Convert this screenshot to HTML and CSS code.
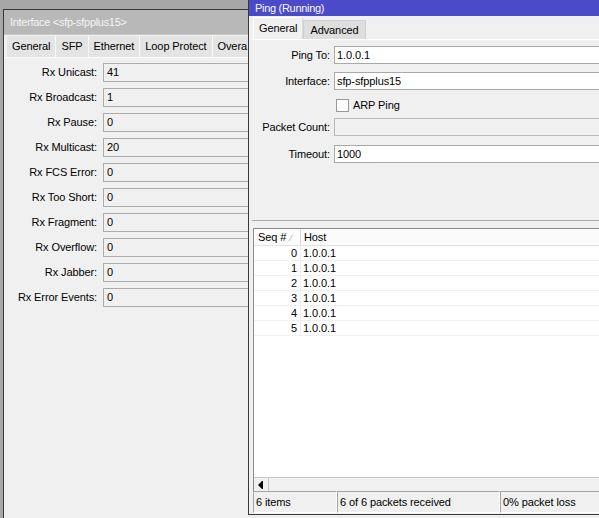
FILE: index.html
```html
<!DOCTYPE html>
<html lang="en">
<head>
<meta charset="UTF-8">
<title>Interface / Ping</title>
<link rel="stylesheet" href="styles.css">
</head>
<body>

<div class="screen">

  <!-- Interface window (behind) -->
  <div class="iface">
    <div class="titlebar">Interface &lt;sfp-sfpplus15&gt;</div>
    <div class="iface-tabs">
      <span class="itab">General</span>
      <span class="itab">SFP</span>
      <span class="itab">Ethernet</span>
      <span class="itab">Loop Protect</span>
      <span class="itab last">Overa</span>
    </div>
    <div class="iface-panel">
      <div class="stat-grid">
        <span class="lbl">Rx Unicast:</span><span class="ro">41</span>
        <span class="lbl">Rx Broadcast:</span><span class="ro">1</span>
        <span class="lbl">Rx Pause:</span><span class="ro">0</span>
        <span class="lbl">Rx Multicast:</span><span class="ro">20</span>
        <span class="lbl">Rx FCS Error:</span><span class="ro">0</span>
        <span class="lbl">Rx Too Short:</span><span class="ro">0</span>
        <span class="lbl">Rx Fragment:</span><span class="ro">0</span>
        <span class="lbl">Rx Overflow:</span><span class="ro">0</span>
        <span class="lbl">Rx Jabber:</span><span class="ro">0</span>
        <span class="lbl">Rx Error Events:</span><span class="ro">0</span>
      </div>
    </div>
  </div>

  <!-- Ping window (active) -->
  <div class="ping-wrap">
    <div class="ping">
      <div class="titlebar active">Ping (Running)</div>
      <div class="ping-tabs">
        <span class="ptab selected">General</span>
        <span class="ptab">Advanced</span>
      </div>
      <div class="ping-panel">
        <div class="frow r1"><span class="flbl">Ping To:</span><span class="inp">1.0.0.1</span></div>
        <div class="frow r2"><span class="flbl">Interface:</span><span class="inp">sfp-sfpplus15</span></div>
        <div class="frow r3"><span class="flbl"></span><span class="chk"></span><span class="chk-text">ARP Ping</span></div>
        <div class="frow r4"><span class="flbl">Packet Count:</span><span class="inp disabled"></span></div>
        <div class="frow r5"><span class="flbl">Timeout:</span><span class="inp">1000</span></div>
      </div>

      <div class="list">
        <div class="thead">
          <span class="th seq">Seq # <span class="sort">&#x2215;</span></span>
          <span class="th host">Host</span>
        </div>
        <div class="rows">
          <div class="tr"><span class="td seq">0</span><span class="td host">1.0.0.1</span></div>
          <div class="tr"><span class="td seq">1</span><span class="td host">1.0.0.1</span></div>
          <div class="tr"><span class="td seq">2</span><span class="td host">1.0.0.1</span></div>
          <div class="tr"><span class="td seq">3</span><span class="td host">1.0.0.1</span></div>
          <div class="tr"><span class="td seq">4</span><span class="td host">1.0.0.1</span></div>
          <div class="tr"><span class="td seq">5</span><span class="td host">1.0.0.1</span></div>
        </div>
        <div class="hscroll">
          <span class="sbtn">
            <svg width="7" height="8" viewBox="0 0 7 8"><polygon points="0,4 4,0 5,0 5,8 4,8" fill="#000"/></svg>
          </span>
        </div>
      </div>

      <div class="status">
        <span class="scell c1">6 items</span>
        <span class="scell c2">6 of 6 packets received</span>
        <span class="scell c3">0% packet loss</span>
      </div>
    </div>
  </div>

</div>

</body>
</html>
```

FILE: styles.css
```css
body {
  margin: 0;
  background-color: #a7a7a7;
  font-family: "Liberation Sans", Arial, sans-serif;
  font-size: 11px;
  letter-spacing: -0.1px;
  color: #000;
  overflow: hidden;
}

.screen {
  display: flex;
  align-items: flex-start;
  width: 599px;
  height: 518px;
  overflow: hidden;
}

/* ---------- Interface window ---------- */
.iface {
  flex-shrink: 0;
  width: 245px;
  height: 509px;
  margin: 9px 0 0 3px;
  box-sizing: border-box;
  border-left: 1px solid #3a3a3a;
  border-top: 1px solid #3a3a3a;
  background-color: #f0f0f0;
  overflow: hidden;
}

.titlebar {
  white-space: nowrap;
  letter-spacing: -0.3px;
}

.iface .titlebar {
  height: 24px;
  line-height: 24px;
  padding-left: 6px;
  background-color: #b8b8b8;
  color: #f4f4f4;
  border-bottom: 1px solid #c8c8c8;
}

.iface-tabs {
  display: flex;
  height: 21px;
  margin-top: 1px;
  padding-left: 3px;
  white-space: nowrap;
}

.itab {
  padding: 0 5px;
  line-height: 21px;
  background-color: #e4e4e4;
  border-right: 1px solid #f8f8f8;
}

.itab.last {
  padding-right: 8px;
}

.iface-panel {
  border-top: 1px solid #fbfbfb;
  padding-top: 5px;
}

.stat-grid {
  display: grid;
  grid-template-columns: 93px 160px;
  grid-auto-rows: 19px;
  column-gap: 6px;
  row-gap: 6px;
}

.lbl {
  text-align: right;
  line-height: 19px;
  white-space: nowrap;
}

.ro {
  box-sizing: border-box;
  height: 19px;
  line-height: 17px;
  padding-left: 3px;
  border: 1px solid #acacac;
  background-color: #f0f0f0;
}

/* ---------- Ping window ---------- */
.ping-wrap {
  flex: 1;
  height: 518px;
  background-color: #eeeeee;
}

.ping {
  display: flex;
  flex-direction: column;
  width: 380px;
  height: 515px;
  box-sizing: border-box;
  border-left: 1px solid #3a3a3a;
  border-bottom: 1px solid #3a3a3a;
  background-color: #f0f0f0;
}

.titlebar.active {
  height: 16px;
  line-height: 16px;
  padding-left: 6px;
  background-color: #4b4bc9;
  color: #f6f6ff;
}

.ping-tabs {
  display: flex;
  align-items: flex-end;
  height: 23px;
  padding-left: 4px;
}

.ptab {
  box-sizing: border-box;
  height: 19px;
  line-height: 18px;
  padding: 0 6px;
  background-color: #dedede;
  border: 1px solid #cfcfcf;
  border-bottom: none;
}

.ptab.selected {
  height: 22px;
  line-height: 20px;
  padding: 0 5px;
  background-color: #f0f0f0;
  border-color: #dadada;
  border-top-color: #fff;
  border-left-color: #fff;
}

.ping-panel {
  height: 182px;
  margin-left: 3px;
  border-top: 1px solid #fff;
  border-bottom: 1px solid #a9a9a9;
  box-sizing: border-box;
}

.frow {
  display: flex;
  align-items: center;
  height: 18px;
}

.r1 { margin-top: 6px; }
.r2 { margin-top: 8px; }
.r3 { margin-top: 6px; }
.r4 { margin-top: 4px; }
.r5 { margin-top: 9px; }

.flbl {
  width: 78px;
  margin-right: 4px;
  text-align: right;
  white-space: nowrap;
}

.inp {
  flex: 1;
  box-sizing: border-box;
  height: 18px;
  line-height: 16px;
  padding-left: 2px;
  border: 1px solid #a9a9a9;
  border-right: none;
  background-color: #fff;
}

.inp.disabled {
  background-color: #f0f0f0;
  border-color: #b9b9b9;
}

.chk {
  width: 11px;
  height: 11px;
  border: 1px solid #9a9a9a;
  background-color: #fff;
  margin-left: 2px;
}

.chk-text {
  margin-left: 4px;
}

/* list */
.list {
  flex: 1;
  display: flex;
  flex-direction: column;
  margin: 7px 0 0 4px;
  border-top: 1px solid #8a8a8a;
  border-left: 1px solid #8a8a8a;
  background-color: #fff;
}

.thead {
  display: flex;
  height: 16px;
  line-height: 16px;
  background-color: #fbfbfb;
  border-bottom: 1px solid #e2e2e2;
}

.th.seq {
  width: 42px;
  padding-left: 4px;
  border-right: 1px solid #d8d8d8;
}

.th.host {
  padding-left: 3px;
}

.sort {
  color: #a9a9a9;
  font-size: 9px;
  margin-left: 1px;
}

.rows {
  flex: 1;
}

.tr {
  display: flex;
  height: 14px;
  line-height: 14px;
  border-bottom: 1px solid #f0f0f0;
}

.td.seq {
  width: 43px;
  padding-right: 3px;
  text-align: right;
  border-right: 1px solid #f0f0f0;
}

.td.host {
  padding-left: 2px;
}

.hscroll {
  height: 13px;
  background-color: #f0f0f0;
  border-top: 1px solid #c8c8c8;
}

.sbtn {
  display: flex;
  align-items: center;
  justify-content: center;
  width: 14px;
  height: 13px;
  border-right: 1px solid #c8c8c8;
}

.status {
  display: flex;
  height: 23px;
  padding-left: 4px;
}

.scell {
  box-sizing: border-box;
  height: 22px;
  line-height: 20px;
  padding-left: 2px;
  border-top: 1px solid #a4a4a4;
  border-left: 1px solid #a4a4a4;
  border-right: 1px solid #fff;
  border-bottom: 1px solid #fff;
  white-space: nowrap;
}

.c1 { width: 84px; }
.c2 { width: 163px; }
.c3 { flex: 1; }
```
